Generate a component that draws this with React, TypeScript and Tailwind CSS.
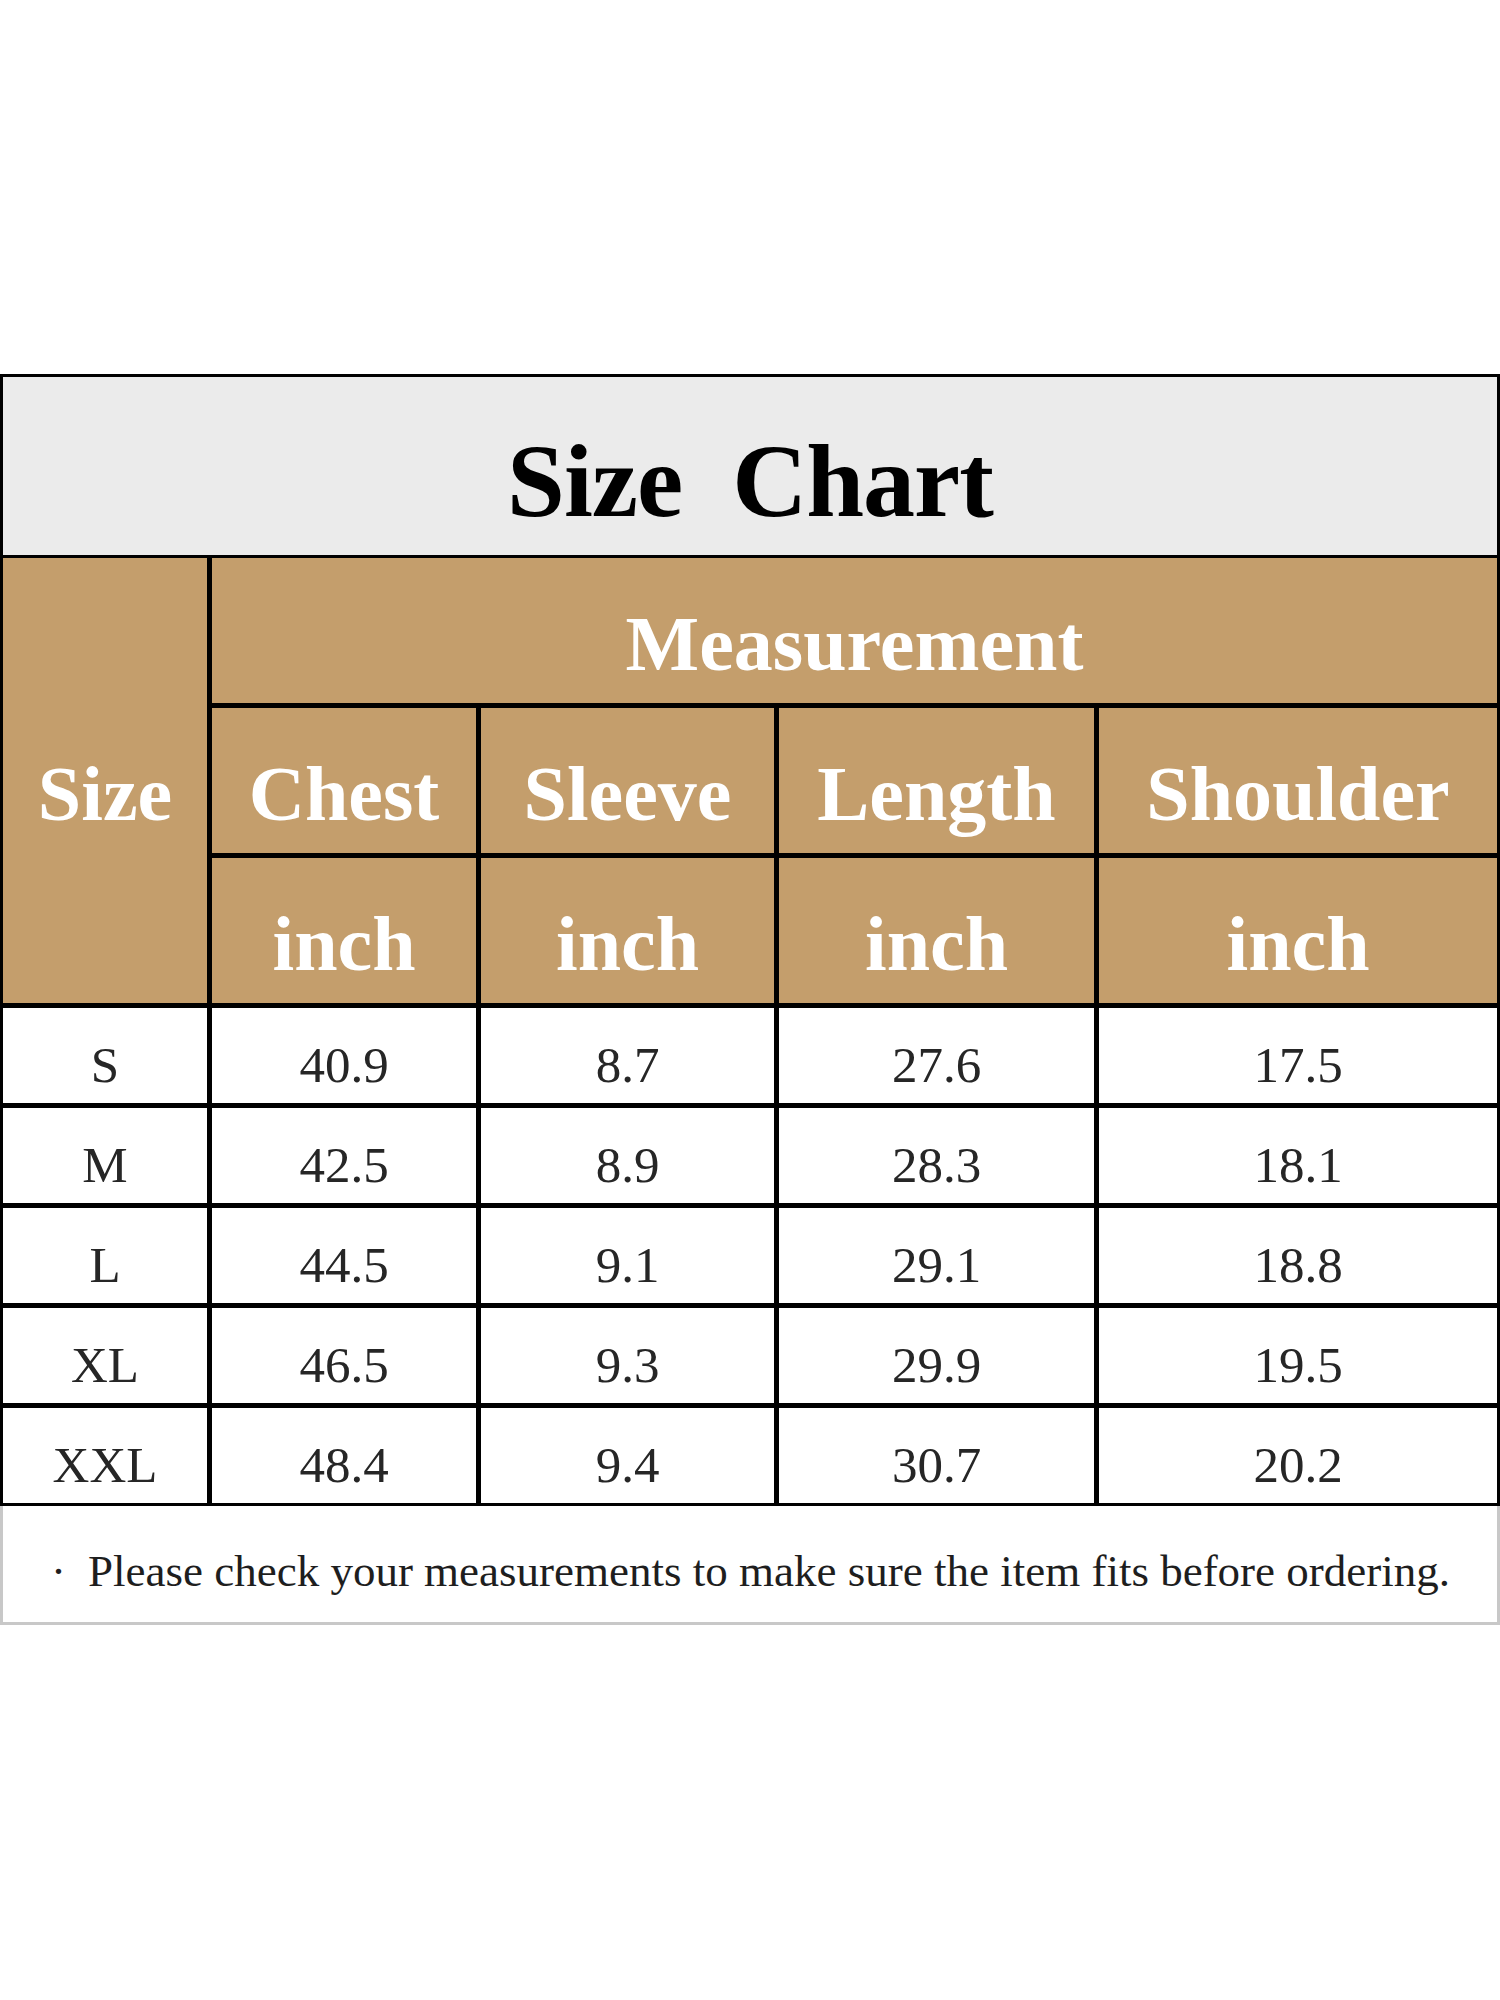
import { Fragment } from "react"

const rows = [
  { size: "S", chest: "40.9", sleeve: "8.7", length: "27.6", shoulder: "17.5" },
  { size: "M", chest: "42.5", sleeve: "8.9", length: "28.3", shoulder: "18.1" },
  { size: "L", chest: "44.5", sleeve: "9.1", length: "29.1", shoulder: "18.8" },
  { size: "XL", chest: "46.5", sleeve: "9.3", length: "29.9", shoulder: "19.5" },
  { size: "XXL", chest: "48.4", sleeve: "9.4", length: "30.7", shoulder: "20.2" },
]

const columns = ["Chest", "Sleeve", "Length", "Shoulder"]

// header cell in the brown band
const HeadCell = ({ children, className = "" }: { children: React.ReactNode; className?: string }) => (
  <div className={`bg-[#c49e6c] flex items-center justify-center pt-[26px] text-white font-bold text-[78px] leading-none ${className}`}>
    {children}
  </div>
)

const DataCell = ({ children }: { children: React.ReactNode }) => (
  <div className="bg-white flex items-center justify-center pt-[20px] text-[#262626] text-[51px] leading-none">{children}</div>
)

export default function App() {
  return (
    <div className="w-[1500px] h-[2000px] bg-white pt-[374px]" style={{ fontFamily: '"Liberation Serif", serif' }}>
      {/* title */}
      <div className="h-[181px] bg-[#ebebeb] border-t-[3px] border-x-[3px] border-black flex items-center justify-center pt-[30px]">
        <h1 className="text-[104px] font-bold leading-none text-black whitespace-pre tracking-[-1px]">Size  Chart</h1>
      </div>

      {/* table */}
      <div className="grid grid-cols-[204px_264px_293px_315px_398px] grid-rows-[145px_145px_145px_repeat(5,95px)] gap-[5px] bg-black p-[3px]">
        <HeadCell className="row-span-3">Size</HeadCell>
        <HeadCell className="col-span-4">Measurement</HeadCell>
        {columns.map((c) => (
          <HeadCell key={c}>{c}</HeadCell>
        ))}
        {columns.map((c) => (
          <HeadCell key={c + "-unit"}>inch</HeadCell>
        ))}
        {rows.map((r) => (
          <Fragment key={r.size}>
            <DataCell>{r.size}</DataCell>
            <DataCell>{r.chest}</DataCell>
            <DataCell>{r.sleeve}</DataCell>
            <DataCell>{r.length}</DataCell>
            <DataCell>{r.shoulder}</DataCell>
          </Fragment>
        ))}
      </div>

      {/* note */}
      <div className="h-[119px] border-[3px] border-t-0 border-[#c8c8c8] bg-white flex items-center pt-[14px] pl-[48px] text-[45px] leading-none text-[#1e1e1e]">
        <span className="mr-[22px]">·</span>
        <span>Please check your measurements to make sure the item fits before ordering.</span>
      </div>
    </div>
  )
}
